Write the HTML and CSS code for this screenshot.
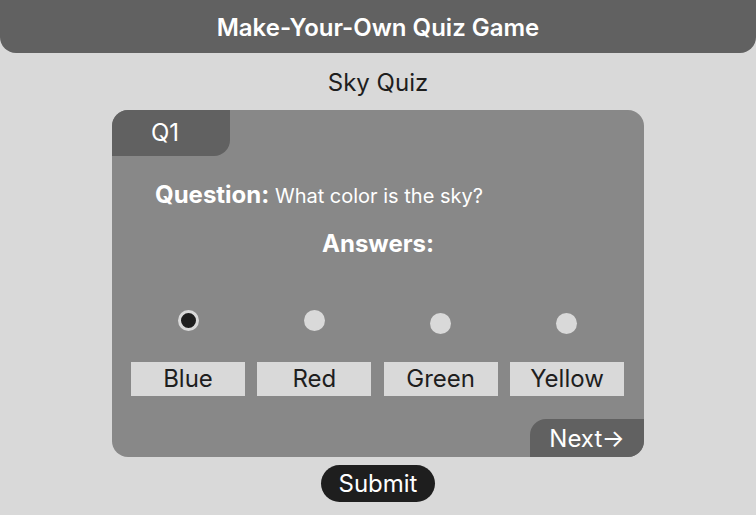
FILE: index.html
```html
<!DOCTYPE html>
<html>
<head>
<meta charset="utf-8">
<link rel="stylesheet" href="styles.css">
</head>
<body>
<header class="topbar"><h1 class="title">Make-Your-Own Quiz Game</h1></header>
<h2 class="quiz-name">Sky Quiz</h2>
<main class="card">
  <div class="tab">Q1</div>
  <p class="question"><b>Question:</b> <span>What color is the sky?</span></p>
  <h3 class="answers">Answers:</h3>
  <div class="options">
    <label class="option"><span class="radio checked"></span><span class="label">Blue</span></label>
    <label class="option"><span class="radio"></span><span class="label">Red</span></label>
    <label class="option low"><span class="radio"></span><span class="label">Green</span></label>
    <label class="option low"><span class="radio"></span><span class="label">Yellow</span></label>
  </div>
  <div class="next-row"><button class="next">Next→</button></div>
</main>
<div class="submit-row"><button class="submit">Submit</button></div>
</body>
</html>
```
FILE: styles.css
```css
* { box-sizing: border-box; }
html, body { margin: 0; padding: 0; }
body {
  background: #d9d9d9;
  font-family: Inter, "Noto Sans", sans-serif;
  color: #1e1e1e;
  width: 756px;
  height: 515px;
  overflow: hidden;
}
.topbar {
  height: 53px;
  padding-top: 2px;
  background: #616161;
  border-radius: 0 0 16px 16px;
  display: flex;
  align-items: center;
  justify-content: center;
}
.title {
  margin: 0;
  color: #fff;
  font-size: 24px;
  font-weight: 600;
  line-height: 28px;
}
.quiz-name {
  margin: 16px 0 0;
  height: 41px;
  font-size: 24px;
  font-weight: 400;
  line-height: 28px;
  text-align: center;
}
.card {
  margin: 0 auto;
  width: 532px;
  height: 347px;
  background: #888888;
  border-radius: 16px;
  display: flex;
  flex-direction: column;
  overflow: hidden;
}
.tab {
  width: 118px;
  height: 46px;
  background: #616161;
  border-radius: 0 0 16px 0;
  color: #fff;
  font-size: 24px;
  line-height: 46px;
  padding-left: 39px;
}
.question {
  margin: 25px 0 0 43px;
  color: #fff;
  line-height: 28px;
  font-size: 20px;
}
.question b { font-size: 24px; font-weight: 700; }
.answers {
  margin: 20px 0 0;
  color: #fff;
  font-size: 24px;
  font-weight: 700;
  line-height: 28px;
  text-align: center;
}
.options {
  display: flex;
  gap: 12.33px;
  padding: 0 20px 0 19px;
  margin-top: 52px;
}
.option {
  width: 114px;
  display: flex;
  flex-direction: column;
  align-items: center;
}
.radio {
  width: 21px;
  height: 21px;
  border-radius: 50%;
  background: #d9d9d9;
  margin-bottom: 31px;
}
.option.low .radio { margin-top: 3px; margin-bottom: 28px; }
.radio.checked {
  background: #1e1e1e;
  border: 3px solid #d9d9d9;
}
.label {
  width: 114px;
  height: 34px;
  background: #d9d9d9;
  text-align: center;
  font-size: 24px;
  line-height: 34px;
  color: #1e1e1e;
}
.next-row {
  margin-top: auto;
  display: flex;
  justify-content: flex-end;
}
.next {
  width: 114px;
  height: 38px;
  border: 0;
  background: #616161;
  border-radius: 16px 0 0 0;
  color: #fff;
  font-family: inherit;
  font-size: 24px;
  padding: 0;
}
.submit-row {
  display: flex;
  justify-content: center;
  margin-top: 8px;
}
.submit {
  width: 114px;
  height: 37px;
  border: 0;
  border-radius: 19px;
  background: #1e1e1e;
  color: #fff;
  font-family: inherit;
  font-size: 24px;
  padding: 0;
}
```
